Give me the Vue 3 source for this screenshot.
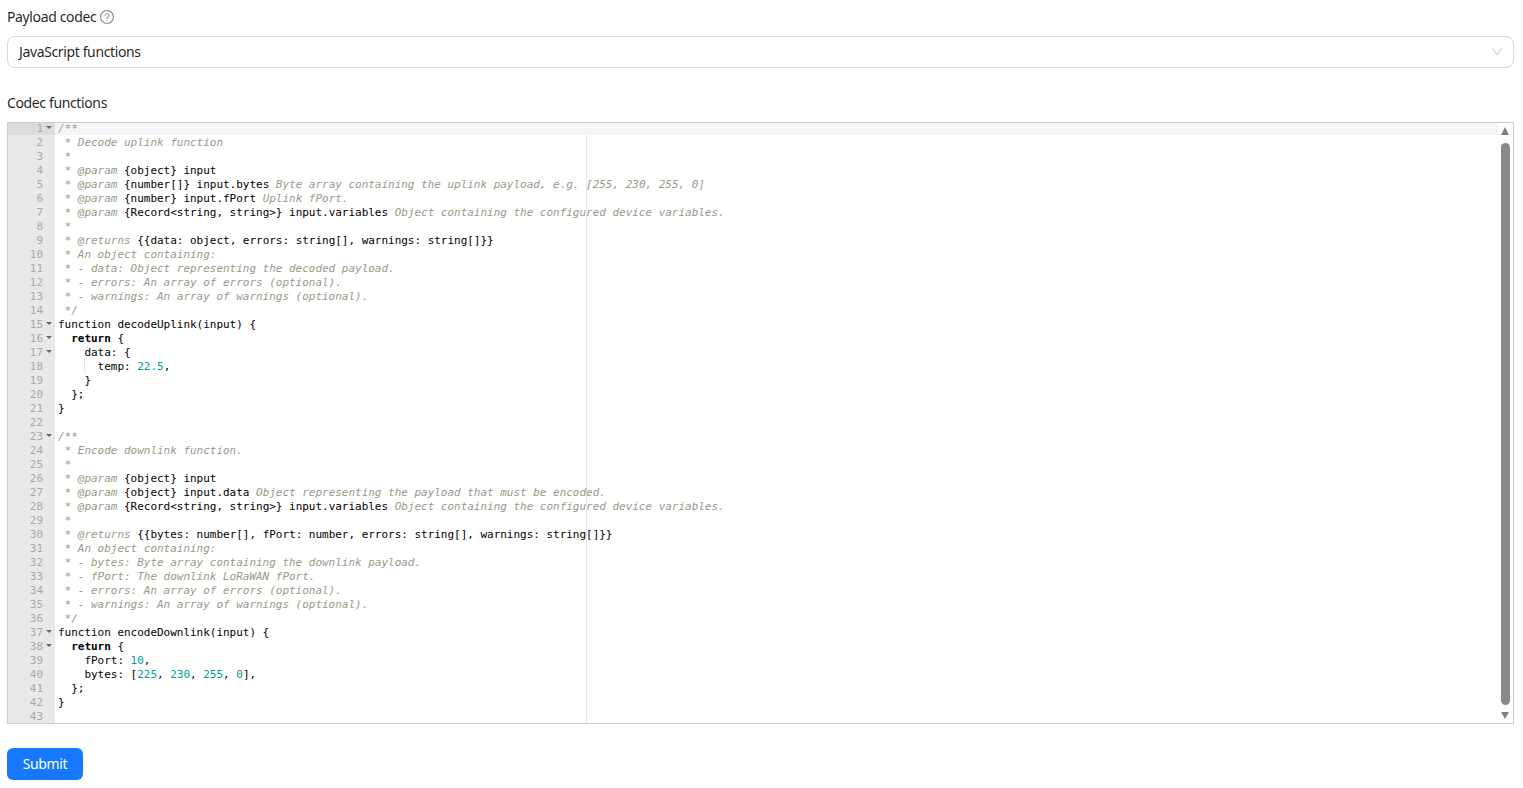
<script setup>
const c = (s) => ['c', s]
const t = (s) => ['t', s]
const k = (s) => ['k', s]
const n = (s) => ['n', s]

const rawLines = [
  [c('/**')],
  [c(' * Decode uplink function')],
  [c(' *')],
  [c(' * @param '), t('{object} input')],
  [c(' * @param '), t('{number[]} input.bytes '), c('Byte array containing the uplink payload, e.g. [255, 230, 255, 0]')],
  [c(' * @param '), t('{number} input.fPort '), c('Uplink fPort.')],
  [c(' * @param '), t('{Record<string, string>} input.variables '), c('Object containing the configured device variables.')],
  [c(' *')],
  [c(' * @returns '), t('{{data: object, errors: string[], warnings: string[]}}')],
  [c(' * An object containing:')],
  [c(' * - data: Object representing the decoded payload.')],
  [c(' * - errors: An array of errors (optional).')],
  [c(' * - warnings: An array of warnings (optional).')],
  [c(' */')],
  [t('function decodeUplink(input) {')],
  [t('  '), k('return'), t(' {')],
  [t('    data: {')],
  [t('    '), ['g', '  '], t('temp: '), n('22.5'), t(',')],
  [t('    }')],
  [t('  };')],
  [t('}')],
  [],
  [c('/**')],
  [c(' * Encode downlink function.')],
  [c(' *')],
  [c(' * @param '), t('{object} input')],
  [c(' * @param '), t('{object} input.data '), c('Object representing the payload that must be encoded.')],
  [c(' * @param '), t('{Record<string, string>} input.variables '), c('Object containing the configured device variables.')],
  [c(' *')],
  [c(' * @returns '), t('{{bytes: number[], fPort: number, errors: string[], warnings: string[]}}')],
  [c(' * An object containing:')],
  [c(' * - bytes: Byte array containing the downlink payload.')],
  [c(' * - fPort: The downlink LoRaWAN fPort.')],
  [c(' * - errors: An array of errors (optional).')],
  [c(' * - warnings: An array of warnings (optional).')],
  [c(' */')],
  [t('function encodeDownlink(input) {')],
  [t('  '), k('return'), t(' {')],
  [t('    fPort: '), n('10'), t(',')],
  [t('    bytes: ['), n('225'), t(', '), n('230'), t(', '), n('255'), t(', '), n('0'), t('],')],
  [t('  };')],
  [t('}')],
  [],
]

const folds = new Set([1, 15, 16, 17, 23, 37, 38])
const lines = rawLines.map((tokens, i) => ({
  num: i + 1,
  tokens,
  fold: folds.has(i + 1),
  active: i === 0,
}))
</script>

<template>
  <form class="page" @submit.prevent>
    <div class="item">
      <label class="label">
        Payload codec
        <svg class="help" viewBox="64 64 896 896" fill="currentColor" aria-hidden="true">
          <path d="M512 64C264.6 64 64 264.6 64 512s200.6 448 448 448 448-200.6 448-448S759.4 64 512 64zm0 820c-205.4 0-372-166.6-372-372s166.6-372 372-372 372 166.6 372 372-166.6 372-372 372z" />
          <path d="M623.6 316.7C593.6 290.4 554 276 512 276s-81.6 14.5-111.6 40.7C369.2 344 352 380.7 352 420v7.6c0 4.4 3.6 8 8 8h48c4.4 0 8-3.6 8-8V420c0-44.1 43.1-80 96-80s96 35.9 96 80c0 31.1-22 59.6-56.1 72.7-21.2 8.1-39.2 22.3-52.1 40.9-13.1 19.1-19.9 41.8-19.9 65.5V628c0 4.4 3.6 8 8 8h48c4.4 0 8-3.6 8-8v-29.5c0-21.1 13.2-40.4 32.9-48 60-23.1 98.8-76.2 98.8-135.2 0-39.3-17.2-76-48.4-103.3z" />
          <path d="M472 732a40 40 0 1 0 80 0 40 40 0 1 0-80 0z" />
        </svg>
      </label>
      <div class="select">
        <span>JavaScript functions</span>
        <svg class="arrow" viewBox="64 64 896 896" fill="currentColor" aria-hidden="true">
          <path d="M884 256h-75c-5.1 0-9.9 2.5-12.9 6.6L512 654.2 227.9 262.6c-3-4.1-7.8-6.6-12.9-6.6h-75c-6.5 0-10.3 7.4-6.5 12.7l352.6 486.1c12.8 17.6 39 17.6 51.7 0l352.6-486.1c3.9-5.3.1-12.7-6.4-12.7z" />
        </svg>
      </div>
    </div>

    <div class="item">
      <label class="label">Codec functions</label>
      <div class="editor">
        <div class="scroller">
          <div class="gutter">
            <div v-for="l in lines" :key="l.num" class="gline" :class="{ gactive: l.active }">
              <span class="num">{{ l.num }}</span>
              <i class="fold" :class="{ on: l.fold }"></i>
            </div>
          </div>
          <div class="code">
            <div class="margin"></div>
            <div v-for="l in lines" :key="l.num" class="line" :class="{ active: l.active }">
              <span v-for="(tok, i) in l.tokens" :key="i" :class="tok[0]">{{ tok[1] }}</span>
            </div>
          </div>
        </div>
        <div class="scrollbar">
          <i class="up"></i>
          <div class="thumb"></div>
          <i class="down"></i>
        </div>
      </div>
    </div>

    <button class="submit" type="submit">Submit</button>
  </form>
</template>

<style>
html, body { margin: 0; background: #fff; overflow: hidden; }
</style>

<style scoped>
.page {
  box-sizing: border-box;
  height: 788px;
  padding: 6px 9px 8px 7px;
  display: flex;
  flex-direction: column;
  font-family: "Noto Sans", "Open Sans", sans-serif;
  font-size: 14px;
  letter-spacing: -0.37px;
  color: rgba(0, 0, 0, 0.88);
}
.item { margin-bottom: 24px; }
.label {
  display: flex;
  align-items: center;
  gap: 4px;
  height: 22px;
  line-height: 22px;
  margin-bottom: 8px;
}
.help { width: 14px; height: 14px; color: rgba(0, 0, 0, 0.45); }
.select {
  box-sizing: border-box;
  height: 32px;
  border: 1px solid #d9d9d9;
  border-radius: 8px;
  padding: 0 10px 2px 11px;
  display: flex;
  align-items: center;
  justify-content: space-between;
}
.arrow { width: 12px; height: 12px; margin-top: 2px; color: rgba(0, 0, 0, 0.2); }
.editor {
  position: relative;
  box-sizing: border-box;
  height: 602px;
  border: 1px solid #ccc;
  overflow: hidden;
  font-family: "DejaVu Sans Mono", monospace;
  font-size: 11px;
  letter-spacing: -0.022px;
  line-height: 16px;
}
.scroller { display: flex; margin-top: -2px; }
.gutter {
  flex: 0 0 47px;
  background: #e8e8e8;
  color: #aaa;
}
.gline {
  display: flex;
  justify-content: flex-end;
  align-items: flex-start;
  height: 14px;
  padding-right: 3px;
}
.gactive { background: #dcdcdc; }
.fold {
  width: 0;
  height: 0;
  margin: 5px 0 0 3px;
  border: 3px solid transparent;
  border-bottom-width: 0;
  border-top-width: 3px;
}
.fold.on { border-top-color: #666; }
.code { position: relative; flex: 1; min-width: 0; }
.margin {
  position: absolute;
  top: 0;
  bottom: 0;
  left: 531px;
  width: 1px;
  background: #e8e8e8;
}
.line {
  position: relative;
  height: 14px;
  padding-left: 3px;
  white-space: pre;
  color: #000;
}
.active { background: #f5f5f5; }
.c { color: #999988; font-style: italic; }
.k { font-weight: 700; }
.n { color: #009999; }
.g {
  display: inline-block;
  height: 14px;
  vertical-align: top;
  background: repeating-linear-gradient(to bottom, #ccc 0 1px, transparent 1px 2px) left top / 1px 100% no-repeat;
}
.scrollbar {
  position: absolute;
  top: 0;
  right: 0;
  bottom: 0;
  width: 15px;
  background: #fff;
  display: flex;
  flex-direction: column;
  align-items: center;
  justify-content: space-between;
  padding: 4px 0 4px;
  box-sizing: border-box;
}
.thumb {
  width: 9px;
  height: 562px;
  border-radius: 5px;
  background: #8a8a8a;
  margin: 1px 0 0 -1px;
}
.up, .down {
  width: 0;
  height: 0;
  margin-left: -1px;
  border-left: 4.5px solid transparent;
  border-right: 4.5px solid transparent;
}
.up { border-bottom: 8px solid #808080; }
.down { border-top: 7px solid #808080; }
.submit {
  align-self: flex-start;
  box-sizing: border-box;
  width: 76px;
  height: 32px;
  padding: 0 0 2px;
  border: 0;
  border-radius: 6px;
  background: #1677ff;
  color: #fff;
  font: inherit;
  letter-spacing: inherit;
}
</style>
